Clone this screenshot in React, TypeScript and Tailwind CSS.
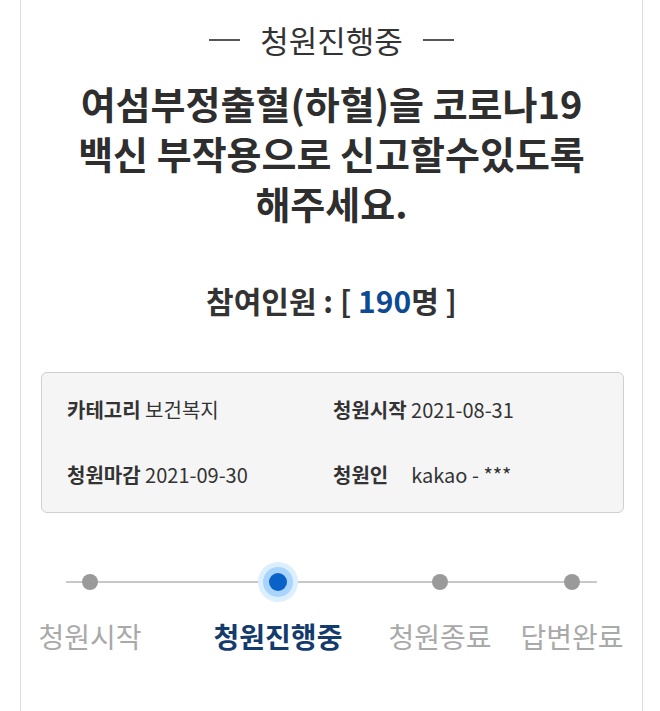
import React from "react";

const font = { fontFamily: '"Noto Sans CJK KR", "Noto Sans", sans-serif' };

export default function App() {
  return (
    <div className="w-[660px] min-h-[711px] bg-white overflow-hidden" style={font}>
      <div className="ml-[20px] w-[623px] min-h-[711px] border-x border-[#dddddd] bg-white">
        {/* status title */}
        <div className="pt-[20px] h-[60px] flex items-center justify-center gap-[20px] text-[#333333]">
          <span className="block w-[31px] h-[2px] bg-[#555555]" />
          <span className="text-[31px] leading-[40px]">청원진행중</span>
          <span className="block w-[31px] h-[2px] bg-[#555555]" />
        </div>

        {/* heading */}
        <h1 className="mt-[18px] text-center text-[38px] leading-[50px] font-bold text-[#2e2e2e]">
          여섬부정출혈(하혈)을 코로나19
          <br />
          백신 부작용으로 신고할수있도록
          <br />
          해주세요.
        </h1>

        {/* participants */}
        <div className="mt-[52px] text-center text-[30px] leading-[40px] font-bold text-[#333333]">
          참여인원 : [ <span className="text-[#0c4a93]">190</span>명 ]
        </div>

        {/* info box */}
        <div className="mt-[52px] ml-[20px] w-[583px] h-[141px] rounded-[6px] border border-[#cfcfcf] bg-[#f5f5f5] px-[25px] pt-[22px] text-[20px] leading-[30px] text-[#333333]">
          <div className="flex">
            <div className="w-[266px] shrink-0">
              <span className="font-bold">카테고리</span> 보건복지
            </div>
            <div>
              <span className="font-bold">청원시작</span> 2021-08-31
            </div>
          </div>
          <div className="flex mt-[35px]">
            <div className="w-[266px] shrink-0">
              <span className="font-bold">청원마감</span> 2021-09-30
            </div>
            <div>
              <span className="font-bold">청원인</span>
              <span className="ml-[23px]">kakao - ***</span>
            </div>
          </div>
        </div>

        {/* timeline */}
        <svg className="block mt-[42px]" width="622" height="54" viewBox="0 0 622 54">
          <line x1="45" y1="27" x2="576" y2="27" stroke="#c8c8c8" strokeWidth="2" />
          <circle cx="69" cy="27" r="8" fill="#9a9a9a" />
          <circle cx="257" cy="27" r="20" fill="#dcefff" />
          <circle cx="257" cy="27" r="15" fill="#a8d4fd" />
          <circle cx="257" cy="27" r="9" fill="#0a62c8" />
          <circle cx="419" cy="27" r="8" fill="#9a9a9a" />
          <circle cx="551" cy="27" r="8" fill="#9a9a9a" />
        </svg>

        <div className="mt-[9px] flex text-[28px] leading-[36px] whitespace-nowrap">
          <div className="w-[138px] shrink-0 flex justify-center text-[#a9a9a9]">청원시작</div>
          <div className="w-[238px] shrink-0 flex justify-center font-bold text-[#143b6e]">청원진행중</div>
          <div className="w-[86px] shrink-0 flex justify-center text-[#a9a9a9]">청원종료</div>
          <div className="w-[178px] shrink-0 flex justify-center text-[#a9a9a9]">답변완료</div>
        </div>
      </div>
    </div>
  );
}
